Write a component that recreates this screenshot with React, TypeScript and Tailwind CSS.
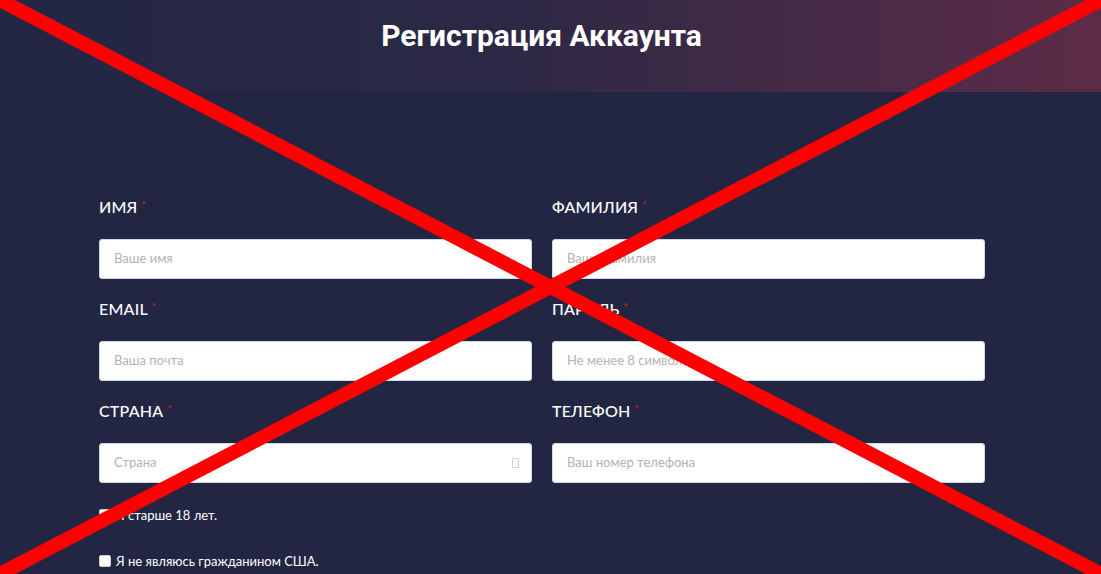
import React from "react";

// Form fields, two per row
const fields = [
  { label: "ИМЯ", placeholder: "Ваше имя" },
  { label: "ФАМИЛИЯ", placeholder: "Ваша фамилия" },
  { label: "EMAIL", placeholder: "Ваша почта" },
  { label: "ПАРОЛЬ", placeholder: "Не менее 8 символов" },
  { label: "СТРАНА", placeholder: "Страна", select: true },
  { label: "ТЕЛЕФОН", placeholder: "Ваш номер телефона" },
];

const checks = ["Я старше 18 лет.", "Я не являюсь гражданином США."];

const Field = ({
  label,
  placeholder,
  select,
}: {
  label: string;
  placeholder: string;
  select?: boolean;
}) => (
  <div className="flex flex-col">
    <div className="flex items-start h-[24px] mb-[20px] text-[16px] leading-[24px] text-white font-medium tracking-[0.2px]">
      {label}
      <span className="text-[#e3192f] text-[10px] leading-[10px] mt-[4px] ml-[4px]">*</span>
    </div>
    <div className="relative h-[40px] bg-white rounded-[3px] border border-[#cbd9ea] flex items-center pl-[14px] text-[13px] text-[#b3b3b3]">
      {placeholder}
      {select && (
        <span className="absolute right-[12px] top-[14px] w-[7px] h-[10px] border border-[#c6d6e8]" />
      )}
    </div>
  </div>
);

const App: React.FC = () => {
  return (
    <div
      className="relative w-[1101px] h-[574px] overflow-hidden bg-[#222642]"
      style={{ fontFamily: "Lato, 'Open Sans', sans-serif" }}
    >
      {/* Header band */}
      <div className="h-[92px] bg-gradient-to-r from-[#222744] via-[#2b2845] via-45% to-[#5d2b47] flex justify-center pt-[14px] pr-[18px]">
        <h1
          className="text-white text-[30px] font-bold leading-[44px]"
          style={{ fontFamily: "Roboto, sans-serif" }}
        >
          Регистрация Аккаунта
        </h1>
      </div>

      {/* Form */}
      <div className="ml-[99px] w-[886px] pt-[103px]">
        <div className="grid grid-cols-2 gap-x-[20px] gap-y-[18px]">
          {fields.map((f) => (
            <Field key={f.label} {...f} />
          ))}
        </div>

        <div className="flex flex-col gap-[32px] mt-[25px]">
          {checks.map((c) => (
            <label key={c} className="flex items-center gap-[5px] text-[13px] leading-[14px] text-white">
              <span className="w-[12px] h-[12px] bg-white rounded-[2px] border border-[#d0d0d0]" />
              {c}
            </label>
          ))}
        </div>
      </div>

      {/* Red cross over the screenshot */}
      <svg
        className="absolute inset-0 pointer-events-none"
        width="1101"
        height="574"
        viewBox="0 0 1101 574"
      >
        <line x1="0" y1="0" x2="1101" y2="574" stroke="#ff0000" strokeWidth="14" />
        <line x1="1101" y1="0" x2="0" y2="574" stroke="#ff0000" strokeWidth="14" />
      </svg>
    </div>
  );
};

export default App;
